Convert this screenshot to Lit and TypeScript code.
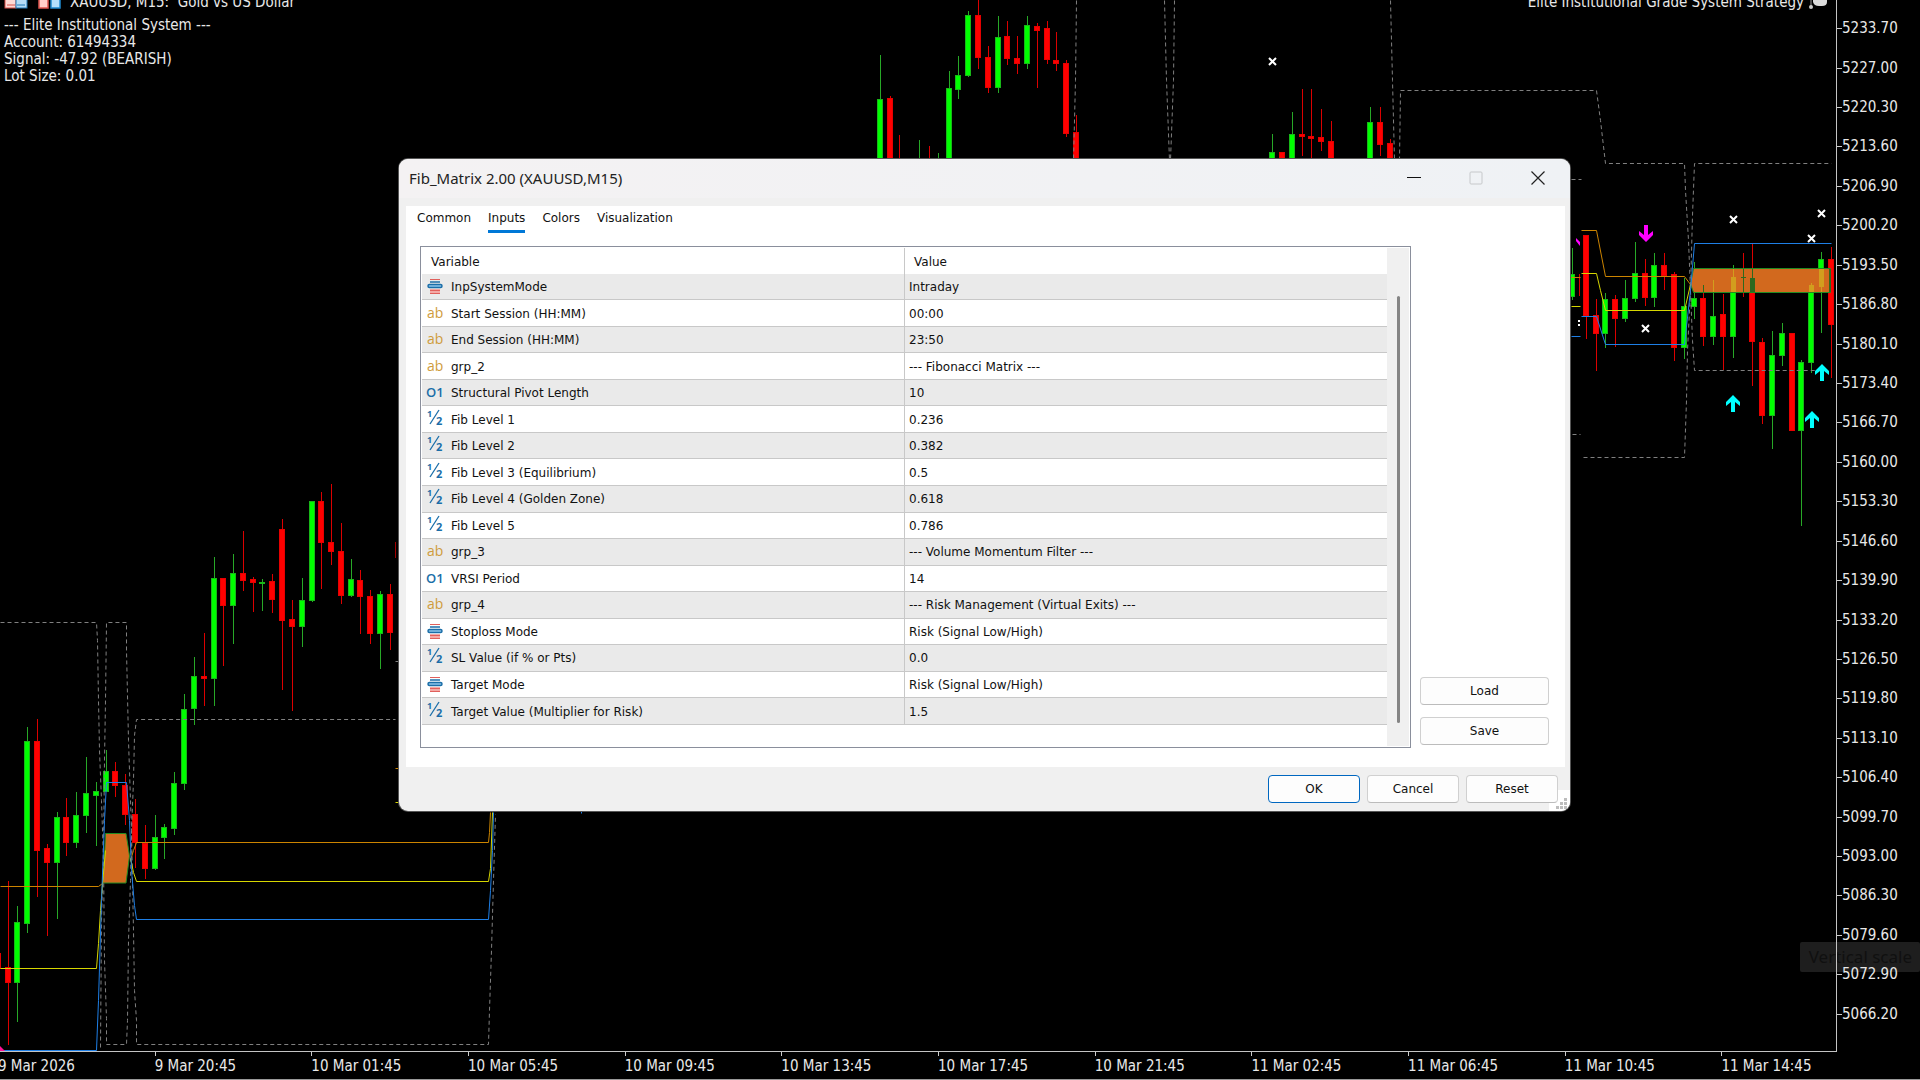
import { LitElement, html, svg, css } from "lit";
import { customElement } from "lit/decorators.js";

type Candle = [x: number, dir: "u" | "d", high: number, top: number, bottom: number, low: number];

const CANDLES: Candle[] = [
  [-2, "d", 953, 953, 969, 969],
  [8, "d", 881, 967, 983, 1045],
  [17, "u", 906, 922, 983, 1022],
  [27, "u", 727, 741, 924, 933],
  [37, "d", 719, 741, 851, 897],
  [47, "d", 844, 848, 863, 936],
  [57, "u", 812, 817, 863, 919],
  [66, "d", 798, 817, 843, 856],
  [76, "u", 792, 815, 843, 848],
  [86, "u", 757, 793, 816, 833],
  [96, "u", 782, 791, 796, 846],
  [106, "u", 750, 771, 792, 792],
  [115, "d", 762, 771, 786, 797],
  [125, "d", 774, 785, 815, 825],
  [135, "d", 799, 814, 843, 868],
  [145, "d", 825, 843, 869, 879],
  [155, "u", 815, 837, 869, 870],
  [164, "u", 824, 827, 838, 859],
  [174, "u", 772, 783, 829, 835],
  [184, "u", 694, 709, 784, 790],
  [194, "u", 657, 676, 709, 725],
  [204, "d", 633, 676, 679, 706],
  [214, "u", 557, 578, 679, 706],
  [223, "d", 578, 578, 606, 666],
  [233, "u", 554, 573, 606, 644],
  [243, "d", 531, 573, 581, 591],
  [253, "d", 577, 579, 583, 612],
  [262, "u", 579, 582, 584, 611],
  [272, "d", 574, 581, 600, 613],
  [282, "d", 519, 529, 621, 690],
  [292, "d", 600, 619, 627, 711],
  [302, "u", 578, 600, 627, 647],
  [312, "u", 501, 501, 601, 602],
  [321, "d", 492, 501, 543, 589],
  [331, "d", 484, 542, 552, 565],
  [341, "d", 523, 551, 596, 604],
  [351, "u", 559, 579, 596, 597],
  [360, "d", 570, 580, 597, 634],
  [370, "d", 590, 596, 634, 644],
  [380, "u", 591, 594, 634, 669],
  [390, "d", 584, 594, 633, 650],
  [880, "u", 55, 99, 190, 190],
  [890, "d", 96, 98, 190, 190],
  [899, "d", 135, 180, 190, 190],
  [919, "u", 140, 180, 190, 190],
  [929, "d", 146, 180, 190, 190],
  [938, "u", 153, 180, 190, 190],
  [949, "u", 71, 88, 190, 190],
  [958, "u", 56, 75, 90, 99],
  [968, "u", 11, 15, 76, 77],
  [978, "d", -4, 15, 58, 69],
  [988, "d", 46, 57, 88, 93],
  [998, "u", 16, 37, 88, 93],
  [1007, "d", 21, 36, 59, 65],
  [1017, "d", 36, 58, 64, 74],
  [1027, "u", 16, 25, 64, 69],
  [1037, "d", 23, 26, 31, 88],
  [1047, "d", 21, 28, 60, 64],
  [1056, "d", 32, 60, 64, 71],
  [1066, "d", 60, 63, 134, 137],
  [1076, "d", 115, 132, 190, 190],
  [1272, "u", 134, 152, 190, 190],
  [1282, "d", 152, 152, 190, 190],
  [1292, "u", 112, 134, 190, 190],
  [1302, "d", 89, 134, 137, 156],
  [1311, "d", 89, 136, 139, 190],
  [1321, "d", 109, 137, 142, 151],
  [1331, "d", 121, 141, 190, 190],
  [1370, "u", 107, 122, 190, 190],
  [1380, "d", 107, 122, 145, 156],
  [1390, "d", 139, 143, 190, 190],
  [1572, "u", 248, 274, 297, 300],
  [1586, "d", 235, 235, 316, 339],
  [1596, "d", 299, 315, 334, 371],
  [1605, "u", 293, 299, 334, 348],
  [1615, "d", 295, 299, 319, 347],
  [1625, "u", 280, 298, 319, 322],
  [1635, "u", 242, 273, 299, 302],
  [1645, "d", 259, 273, 298, 306],
  [1654, "u", 253, 265, 298, 307],
  [1664, "d", 253, 265, 276, 290],
  [1674, "d", 272, 274, 348, 361],
  [1684, "u", 278, 306, 348, 359],
  [1694, "u", 262, 298, 307, 319],
  [1703, "d", 285, 298, 337, 346],
  [1713, "u", 280, 316, 337, 345],
  [1723, "d", 294, 314, 337, 370],
  [1733, "u", 265, 276, 337, 358],
  [1743, "d", 253, 276, 278, 297],
  [1752, "d", 243, 277, 342, 386],
  [1762, "d", 338, 342, 416, 424],
  [1772, "u", 331, 355, 416, 449],
  [1782, "u", 323, 333, 356, 366],
  [1792, "d", 333, 333, 431, 431],
  [1801, "u", 360, 362, 431, 526],
  [1811, "u", 283, 284, 363, 373],
  [1821, "u", 252, 259, 287, 333],
  [1831, "d", 247, 259, 325, 378],
];

const BANDS = [
  "M0 622H96L97 640L98 700L99 750L101 800L103 860L104 960L106 1018V1044H126L127 1020L128 940L130 880L131 830L133 780L134 735L136 719H395",
  "M100 1047L101 920L103 850L104 760L105 700L106 622H126V650L128 740L131 830L133 930L134 990L136 1020V1044H488L489 1010L491 950L493 880L495 814",
  "M1076 0L1075 80L1073 160",
  "M1164 0L1166 80L1169 160",
  "M1174 0L1173 80L1170 160",
  "M1390 0L1392 80L1394 160",
  "M1399 160L1400 90H1596L1600 120L1605 163H1684L1685 190L1688 240L1690 290L1692 340L1694 370H1816",
  "M1583 457H1684L1686 400L1687 350L1690 290L1692 215L1694 163H1831",
  "M1571 179H1581",
  "M1572 434H1580",
  "M395 661H399",
];

const LEVELS: [cls: string, d: string][] = [
  ["orange", "M0 886H98L102 883M130 860L133 850L136 842H488L489 832L490 812M395 768H399M1571 277H1580M1581 230H1596L1605 276H1684L1690 284"],
  ["yellow", "M0 968H96L98 943L100 910L102 884L105 850M130 858L133 872L136 881H488L490 868L492 812M395 802H399M1571 306H1580M1581 273H1596L1600 290L1605 310H1684L1690 284"],
  ["blue", "M0 1050H96L98 1000L101 900L104 820L106 782H126L129 820L131 870L134 905L136 919H488L490 890L492 850L493 812M581 810V813M1571 336H1580M1581 316H1596L1605 344H1684L1690 290L1694 243H1831"],
];

const CROSSES = [
  [1273, 62],
  [1734, 220],
  [1822, 214],
  [1812, 239],
  [1646, 329],
];

const BUYS = [
  [1733, 395],
  [1812, 411],
  [1822, 364],
];

const PRICES = [
  "5233.70", "5227.00", "5220.30", "5213.60", "5206.90", "5200.20", "5193.50", "5186.80", "5180.10",
  "5173.40", "5166.70", "5160.00", "5153.30", "5146.60", "5139.90", "5133.20", "5126.50", "5119.80",
  "5113.10", "5106.40", "5099.70", "5093.00", "5086.30", "5079.60", "5072.90", "5066.20",
];

const TIMES = [
  "9 Mar 2026", "9 Mar 20:45", "10 Mar 01:45", "10 Mar 05:45", "10 Mar 09:45", "10 Mar 13:45",
  "10 Mar 17:45", "10 Mar 21:45", "11 Mar 02:45", "11 Mar 06:45", "11 Mar 10:45", "11 Mar 14:45",
];

type Kind = "enum" | "string" | "int" | "double";

const INPUTS: [kind: Kind, name: string, value: string][] = [
  ["enum", "InpSystemMode", "Intraday"],
  ["string", "Start Session (HH:MM)", "00:00"],
  ["string", "End Session (HH:MM)", "23:50"],
  ["string", "grp_2", "--- Fibonacci Matrix ---"],
  ["int", "Structural Pivot Length", "10"],
  ["double", "Fib Level 1", "0.236"],
  ["double", "Fib Level 2", "0.382"],
  ["double", "Fib Level 3 (Equilibrium)", "0.5"],
  ["double", "Fib Level 4 (Golden Zone)", "0.618"],
  ["double", "Fib Level 5", "0.786"],
  ["string", "grp_3", "--- Volume Momentum Filter ---"],
  ["int", "VRSI Period", "14"],
  ["string", "grp_4", "--- Risk Management (Virtual Exits) ---"],
  ["enum", "Stoploss Mode", "Risk (Signal Low/High)"],
  ["double", "SL Value (if % or Pts)", "0.0"],
  ["enum", "Target Mode", "Risk (Signal Low/High)"],
  ["double", "Target Value (Multiplier for Risk)", "1.5"],
];

@customElement("price-chart")
class PriceChart extends LitElement {
  static styles = css`
    :host { display: block; overflow: hidden; }
    svg { display: block; }
    .crisp { shape-rendering: crispEdges; }
    .u .wick { fill: #27a827; }
    .u .body { fill: #00ff00; stroke: #18b818; }
    .d .wick { fill: #dc0000; }
    .d .body { fill: #ff0000; stroke: #e60000; }
    .inzone .u .wick, .inzone .u .body { fill: #d29e1e; stroke: none; }
    .inzone .d .wick, .inzone .d .body { fill: #2d691e; stroke: none; }
    .band { fill: none; stroke: #808080; stroke-dasharray: 4 3; }
    .level { fill: none; }
    .orange { stroke: #cc8400; }
    .yellow { stroke: #d6d600; }
    .blue { stroke: #1e7fe6; }
    .zone { fill: #d2691e; stroke: #228b22; }
    .cross { stroke: #fff; stroke-width: 2; }
    .buy { fill: #00ffff; }
    .sell { fill: #ff00ff; }
    .pink { fill: #ff1493; }
  `;

  private candle([x, dir, high, top, bottom, low]: Candle) {
    return svg`<g class=${dir}>
      <rect class="wick" x=${x} y=${high} width="1" height=${low - high}></rect>
      <rect class="body" x=${x - 2.5} y=${top + 0.5} width="5" height=${Math.max(bottom - top - 1, 1)}></rect>
    </g>`;
  }

  render() {
    return html`<svg width="1836" height="1052" viewBox="0 0 1836 1052" aria-hidden="true">
      <defs><clipPath id="zone"><rect x="1693" y="269" width="138" height="23"></rect></clipPath></defs>
      <g class="crisp">
        ${CANDLES.map((c) => this.candle(c))}
        <rect x="395" y="542" width="1" height="16" fill="#a00000"></rect>
        <rect x="1579" y="274" width="1" height="22" fill="#dc0000"></rect>
      </g>
      <path class="zone" d="M105.5 833.5H126L128 846L129.500 856L126 883H102.500L104.500 856Z"></path>
      <path class="zone" d="M1690.500 284L1693.500 268.500H1830.500V292.500H1693.500Z"></path>
      <g class="inzone crisp" clip-path="url(#zone)">
        ${CANDLES.filter((c) => c[0] > 1700).map((c) => this.candle(c))}
      </g>
      <g transform="translate(0.5 0.5)">
        ${BANDS.map((d) => svg`<path class="band" d=${d}></path>`)}
        ${LEVELS.map(([cls, d]) => svg`<path class="level ${cls}" d=${d}></path>`)}
      </g>
      ${CROSSES.map(([x, y]) => svg`<path class="cross" d="M${x - 4} ${y - 4}l7 7M${x + 3} ${y - 4}l-7 7"></path>`)}
      ${BUYS.map(([x, y]) => svg`<path class="buy" d="M${x} ${y}l7 7v4l-5 -4v10h-4v-10l-5 4v-4z"></path>`)}
      <path class="sell" d="M1646 242l7 -7v-4l-5 4v-10h-4v10l-5 -4v4z"></path>
      <path class="sell" d="M1576 238l4 4v4l-4 -5z"></path>
      <path class="cross" d="M1579 320v2M1579 324v2"></path>
      <path class="pink" d="M0 1046l5 5h-5z"></path>
    </svg>`;
  }
}

@customElement("inputs-dialog")
class InputsDialog extends LitElement {
  static styles = css`
    :host { display: block; font: 12px/16px "DejaVu Sans", "Noto Sans", sans-serif; color: #111; }
    .window {
      display: flex; flex-direction: column; overflow: hidden; position: relative;
      border-radius: 9px; background: #f0f0f0; box-shadow: 0 0 0 1px #555;
    }
    .titlebar {
      display: flex; align-items: center; height: 39px; padding: 0 1px 0 10px; margin-bottom: 8px;
      background: linear-gradient(90deg, #f4f2f3, #f1f2f4 60%, #eff2f5);
    }
    h1 { flex: 1; margin: 0; padding-bottom: 2px; font: 15px/20px "Noto Sans", "Open Sans", sans-serif; color: #222; }
    button { font: inherit; color: inherit; }
    .caption { width: 62px; height: 39px; padding: 0 0 2px; border: 0; background: none; display: grid; place-items: center; }
    .panel { margin: 0 5px 0 7px; padding: 0 16px 19px 11px; background: #fff; }
    .tabs { display: flex; gap: 17px; padding: 0 0 13px; }
    .tab { height: 27px; padding: 0; border: 0; border-bottom: 3px solid transparent; background: none; }
    .tab.active { border-color: #0078d7; }
    .content { display: flex; gap: 9px; margin-left: 3px; }
    .list { flex: 1; display: flex; box-sizing: border-box; height: 502px; padding: 1px; border: 1px solid #8a8f9c; }
    .scroll { flex: 1; }
    table { width: 100%; height: 477px; border-collapse: collapse; table-layout: fixed; }
    th, td { box-sizing: border-box; padding: 1px 0 0 4px; text-align: left; font-weight: normal; }
    th { height: 26px; padding-left: 9px; }
    .name { width: 50%; }
    td + td, th + th { border-left: 1px solid #c8c8c8; }
    tbody tr { border-bottom: 1px solid #c8c8c8; }
    tbody tr:nth-child(odd) { background: #eaeaea; }
    .cell { display: flex; align-items: center; gap: 8px; padding-left: 1px; }
    .icon { display: block; width: 16px; height: 16px; margin: -2px 0 0; overflow: visible; }
    .icon text { font-family: "Open Sans", "Noto Sans", sans-serif; }
    .gold { fill: #cf9c3c; }
    .ink { fill: #1b6ea8; }
    .track { width: 22px; background: #f0f0f0; padding: 48px 0 23px; box-sizing: border-box; display: flex; justify-content: center; }
    .thumb { width: 3px; border-radius: 2px; background: #858585; }
    .side { display: flex; flex-direction: column; justify-content: flex-end; gap: 12px; width: 129px; padding-bottom: 3px; }
    .push {
      height: 28px; padding: 0; box-sizing: border-box; border: 1px solid #d0d0d0; border-bottom-color: #bcbcbc;
      border-radius: 4px; background: #fdfdfd;
    }
    .push.primary { border-color: #0067c0; }
    .footer { display: flex; justify-content: flex-end; gap: 7px; height: 36px; padding: 8px 12px 0 0; }
    .footer .push { width: 92px; position: relative; z-index: 1; }
    .grip { position: absolute; right: 0; bottom: 0; }
  `;

  private icon(kind: Kind) {
    if (kind === "enum") {
      return html`<svg class="icon" viewBox="0 0 16 16" aria-hidden="true">
        <path d="M3 11h10v5H3z" fill="#f4a9a5"></path>
        <path d="M3 1.500h10M3 12.500h10M3 15.500h10" stroke="#e0605c"></path>
        <path d="M3 4h10" stroke="#1b6ea8" stroke-width="1.500"></path>
        <rect x="1" y="6.500" width="14" height="3" rx="1.500" fill="#8cc4ea" stroke="#1b6ea8" stroke-width="1.500"></rect>
      </svg>`;
    }
    if (kind === "string") {
      return html`<svg class="icon" viewBox="0 0 16 16" aria-hidden="true"><text class="gold" x="0" y="13" font-size="14">ab</text></svg>`;
    }
    if (kind === "int") {
      return html`<svg class="icon" viewBox="0 0 16 16" aria-hidden="true"><text class="ink" x="-1" y="13" font-size="13" font-weight="600">O1</text></svg>`;
    }
    return html`<svg class="icon" viewBox="0 0 16 16" aria-hidden="true">
      <text class="ink" x="0" y="6" font-size="9" font-weight="700">1</text>
      <path d="M12 -1L3 13" stroke="#1b6ea8" stroke-width="1.3"></path>
      <text class="ink" x="9" y="14" font-size="11" font-weight="700">2</text>
    </svg>`;
  }

  render() {
    return html`<section class="window" role="dialog" aria-labelledby="title">
      <header class="titlebar">
        <h1 id="title">Fib_Matrix 2.00 (XAUUSD,M15)</h1>
        <button class="caption" aria-label="Minimize">
          <svg width="14" height="14"><path d="M0 6.500h14" stroke="#111"></path></svg>
        </button>
        <button class="caption" aria-label="Maximize" disabled>
          <svg width="14" height="14"><rect x="1" y="1" width="12" height="12" rx="1" fill="none" stroke="#c6c8ca"></rect></svg>
        </button>
        <button class="caption" aria-label="Close">
          <svg width="14" height="14"><path d="M.5 .5l13 13M13.500 .5l-13 13" stroke="#222" stroke-width="1.2"></path></svg>
        </button>
      </header>
      <div class="panel">
        <nav class="tabs" role="tablist">
          ${["Common", "Inputs", "Colors", "Visualization"].map(
            (t) => html`<button class="tab ${t === "Inputs" ? "active" : ""}" role="tab" aria-selected=${t === "Inputs"}>${t}</button>`
          )}
        </nav>
        <div class="content">
          <div class="list">
            <div class="scroll">
              <table>
                <thead><tr><th class="name">Variable</th><th>Value</th></tr></thead>
                <tbody>
                  ${INPUTS.map(
                    ([kind, name, value]) => html`<tr><td><div class="cell">${this.icon(kind)}<span>${name}</span></div></td><td>${value}</td></tr>`
                  )}
                </tbody>
              </table>
            </div>
            <div class="track"><div class="thumb"></div></div>
          </div>
          <div class="side">
            <button class="push">Load</button>
            <button class="push">Save</button>
          </div>
        </div>
      </div>
      <footer class="footer">
        <button class="push primary">OK</button>
        <button class="push">Cancel</button>
        <button class="push">Reset</button>
      </footer>
      <svg class="grip" width="21" height="21" aria-hidden="true">
        <rect width="21" height="21" fill="#fff"></rect>
        <path d="M15 8h3v3h-3zM11 12h3v3h-3zM15 12h3v3h-3zM7 16h3v3H7zM11 16h3v3h-3zM15 16h3v3h-3z" fill="#bdbdbd"></path>
      </svg>
    </section>`;
  }
}

@customElement("app-root")
class AppRoot extends LitElement {
  static styles = css`
    :host {
      display: grid; position: relative; box-sizing: border-box; height: 100vh; overflow: hidden;
      grid-template: minmax(0, 1fr) 27px / minmax(0, 1fr) 84px;
      background: #000; color: #e8e8e8; font: 15px/17px "DejaVu Sans Condensed", "Noto Sans", sans-serif;
      border-bottom: 1px solid #999;
    }
    .chart { position: relative; min-width: 0; overflow: hidden; }
    .topbar { position: absolute; inset: -7px 8px auto 4px; display: flex; align-items: center; height: 18px; white-space: pre; }
    .symbol { flex: 1; margin-left: 8px; }
    .tools { display: block; }
    .badge { display: block; margin-left: 4px; }
    .comment { position: absolute; left: 4px; top: 17px; margin: 0; font: inherit; }
    .prices {
      display: flex; flex-direction: column; box-sizing: border-box; padding: 9px 0 18px;
      border-left: 1px solid #c4c4c4; margin: 0; list-style: none; position: relative; z-index: 1;
    }
    .price { flex: 1; display: flex; align-items: center; }
    .price::before { content: ""; width: 5px; height: 1px; background: #ccc; }
    .times {
      grid-column: 1 / -1; display: flex; margin: 0 42px 0 -2px; padding: 0; list-style: none;
    }
    .time { flex: 1; position: relative; padding-top: 6px; white-space: nowrap; }
    .time::before { content: ""; position: absolute; left: 0; top: 0; width: 1px; height: 4px; background: #ccc; }
    .axis { position: absolute; left: 0; right: 84px; bottom: 27px; height: 1px; background: #c4c4c4; }
    .dialog { position: absolute; left: 399px; right: 350px; top: 159px; }
    .tip {
      position: absolute; right: 0; bottom: 107px; padding: 3px 8px 3px 9px; border-radius: 2px;
      font: 17px/24px "Noto Sans", "Open Sans", sans-serif; color: #101010; background: #1e1e1e;
    }
  `;

  render() {
    return html`
      <main class="chart">
        <price-chart></price-chart>
        <div class="topbar">
          <svg class="tools" width="58" height="16" aria-hidden="true">
            <rect x="1" y="1" width="11" height="13" fill="#ffd9d4" stroke="#d94f48"></rect>
            <rect x="12" y="1" width="11" height="13" fill="#b5dcf7" stroke="#1f78b8"></rect>
            <path d="M3 11h8" stroke="#d94f48"></path>
            <path d="M13 11h8" stroke="#1f78b8"></path>
            <rect x="35" y="1" width="9" height="13" fill="#ffd0ca" stroke="#e0564f" stroke-width="1.500"></rect>
            <rect x="47" y="1" width="9" height="13" fill="#b5e0fb" stroke="#1f8ad0" stroke-width="1.500"></rect>
          </svg>
          <span class="symbol">XAUUSD, M15:  Gold vs US Dollar</span>
          <span>Elite Institutional Grade System Strategy</span>
          <svg class="badge" width="20" height="18" aria-hidden="true">
            <path d="M5 6h14v3q0 4 -5 4h-3q-5 0 -6 -4z" fill="#dcdcdc"></path>
            <path d="M3 6v8" stroke="#999"></path>
            <circle cx="3" cy="14" r="2" fill="#ccc"></circle>
          </svg>
        </div>
        <pre class="comment">--- Elite Institutional System ---
Account: 61494334
Signal: -47.92 (BEARISH)
Lot Size: 0.01</pre>
      </main>
      <ul class="prices">${PRICES.map((p) => html`<li class="price">${p}</li>`)}</ul>
      <ul class="times">${TIMES.map((t) => html`<li class="time">${t}</li>`)}</ul>
      <div class="axis"></div>
      <inputs-dialog class="dialog"></inputs-dialog>
      <div class="tip" role="tooltip">Vertical scale</div>
    `;
  }
}
